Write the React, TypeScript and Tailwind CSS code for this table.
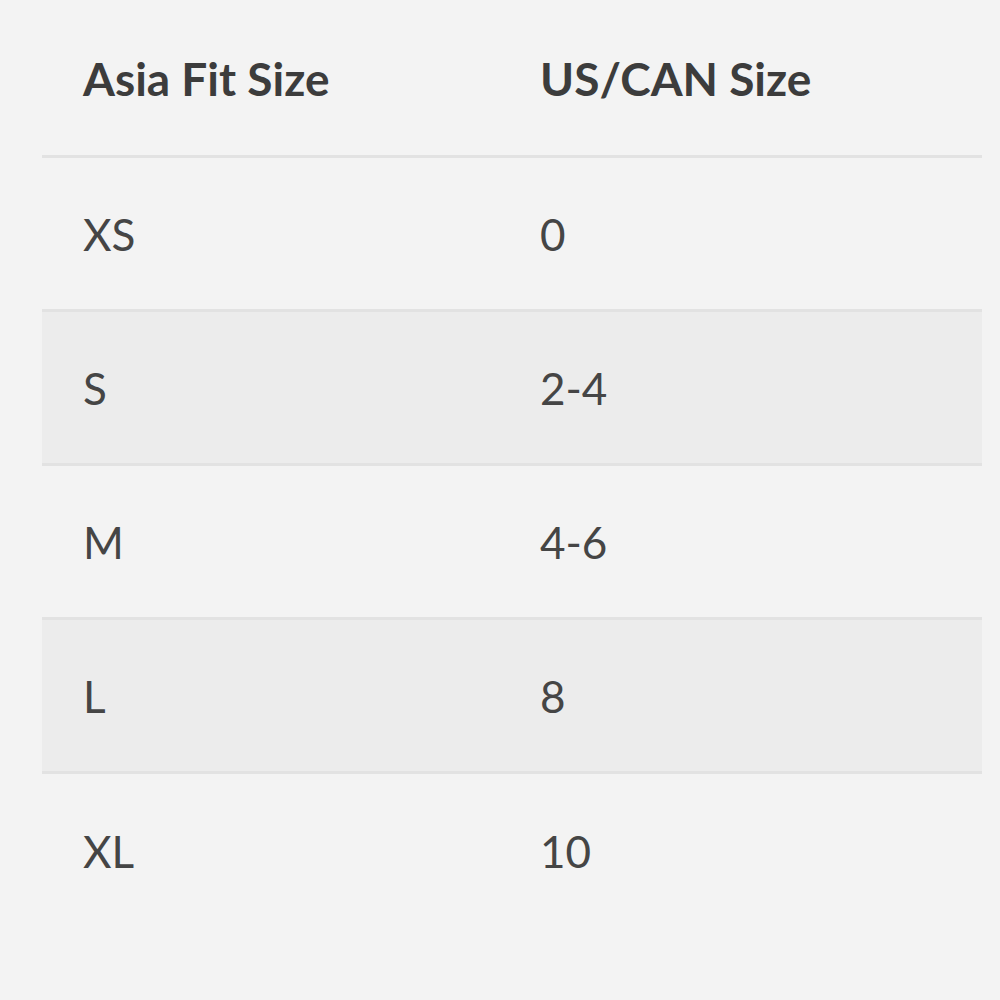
import React from 'react';

const rows = [
  { asia: 'XS', us: '0' },
  { asia: 'S', us: '2-4' },
  { asia: 'M', us: '4-6' },
  { asia: 'L', us: '8' },
  { asia: 'XL', us: '10' },
];

export default function App() {
  return (
    <div className="w-[1000px] h-[1000px] bg-[#f3f3f3] pl-[42px] pr-[18px] font-['Lato',sans-serif] text-[#454545]">
      <div className="flex h-[158px] items-center border-b-[3px] border-[#e2e2e2] pt-[2px]">
        <div className="w-[458px] pl-[41px] text-[46px] font-bold text-[#3c3c3c]">Asia Fit Size</div>
        <div className="pl-[40px] text-[46px] font-bold text-[#3c3c3c]">US/CAN Size</div>
      </div>
      {rows.map((r, i) => (
        <div
          key={r.asia}
          className={`flex h-[154px] items-center text-[44px] ${i % 2 === 1 ? 'bg-[#ececec]' : ''} ${i < rows.length - 1 ? 'border-b-[3px] border-[#e2e2e2]' : ''}`}
        >
          <div className="w-[458px] pl-[41px]">{r.asia}</div>
          <div className="pl-[40px]">{r.us}</div>
        </div>
      ))}
    </div>
  );
}
